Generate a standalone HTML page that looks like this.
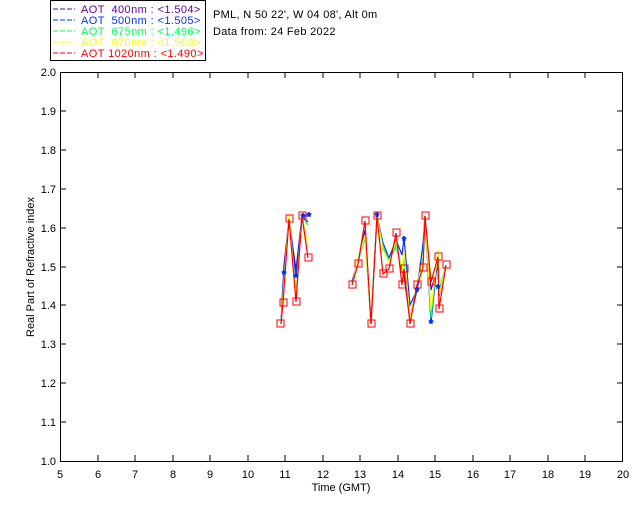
<!DOCTYPE html>
<html><head><style>
body{margin:0;background:#fff;width:640px;height:512px;overflow:hidden}
svg{display:block}
text{font-family:"Liberation Sans",sans-serif;font-size:11px}
</style></head><body>
<svg width="640" height="512" viewBox="0 0 640 512">
<rect x="50.5" y="0.5" width="155" height="60" fill="#fff" stroke="#000"/>
<g font-size="10.5" letter-spacing="0.4">
<line x1="53" y1="9" x2="75" y2="9" stroke="#6000a0" stroke-dasharray="5,2"/><text x="81" y="13" fill="#6000a0" xml:space="preserve">AOT  400nm : &lt;1.504&gt;</text>
<line x1="53" y1="20" x2="75" y2="20" stroke="#0030ff" stroke-dasharray="5,2"/><text x="81" y="24" fill="#0030ff" xml:space="preserve">AOT  500nm : &lt;1.505&gt;</text>
<line x1="53" y1="31" x2="75" y2="31" stroke="#00ff60" stroke-dasharray="5,2"/><text x="81" y="35" fill="#00ff60" xml:space="preserve">AOT  675nm : &lt;1.496&gt;</text>
<line x1="53" y1="42" x2="75" y2="42" stroke="#ffff00" stroke-dasharray="5,2"/><text x="81" y="46" fill="#ffff00" xml:space="preserve">AOT  870nm : &lt;1.503&gt;</text>
<line x1="53" y1="53" x2="75" y2="53" stroke="#ff0000" stroke-dasharray="5,2"/><text x="81" y="57" fill="#ff0000" xml:space="preserve">AOT 1020nm : &lt;1.490&gt;</text>
</g>
<text x="213" y="18" letter-spacing="0.3">PML, N 50 22', W 04 08', Alt 0m</text>
<text x="213" y="35" letter-spacing="0.3">Data from: 24 Feb 2022</text>
<rect x="60.5" y="72.5" width="562" height="389" fill="none" stroke="#000"/>
<g stroke="#000">
<path d="M98 72v6M135 72v6M173 72v6M210 72v6M248 72v6M285 72v6M323 72v6M360 72v6M398 72v6M435 72v6M473 72v6M510 72v6M548 72v6M585 72v6"/>
<path d="M98 461v-6M135 461v-6M173 461v-6M210 461v-6M248 461v-6M285 461v-6M323 461v-6M360 461v-6M398 461v-6M435 461v-6M473 461v-6M510 461v-6M548 461v-6M585 461v-6"/>
<path d="M60 111h6M60 150h6M60 189h6M60 228h6M60 267h6M60 305h6M60 344h6M60 383h6M60 422h6"/>
<path d="M623 111h-6M623 150h-6M623 189h-6M623 228h-6M623 267h-6M623 305h-6M623 344h-6M623 383h-6M623 422h-6"/>
</g>
<g font-size="10" text-anchor="end">
<text x="56" y="76">2.0</text><text x="56" y="115">1.9</text><text x="56" y="154">1.8</text><text x="56" y="193">1.7</text><text x="56" y="232">1.6</text><text x="56" y="271">1.5</text><text x="56" y="309">1.4</text><text x="56" y="348">1.3</text><text x="56" y="387">1.2</text><text x="56" y="426">1.1</text><text x="56" y="465">1.0</text>
</g>
<g font-size="10" text-anchor="middle">
<text x="60" y="478">5</text><text x="98" y="478">6</text><text x="135" y="478">7</text><text x="173" y="478">8</text><text x="210" y="478">9</text><text x="248" y="478">10</text><text x="285" y="478">11</text><text x="323" y="478">12</text><text x="360" y="478">13</text><text x="398" y="478">14</text><text x="435" y="478">15</text><text x="473" y="478">16</text><text x="510" y="478">17</text><text x="548" y="478">18</text><text x="585" y="478">19</text><text x="623" y="478">20</text>
<text x="341" y="491">Time (GMT)</text>
<text transform="translate(34,267) rotate(-90)">Real Part of Refractive index</text>
</g>
<g fill="none" stroke-width="1.2">
<polyline stroke="#6000a0" points="281,322 284,265 289,219 296,270 302,216 308,222"/>
<polyline stroke="#0030ff" points="281,324 284,274 289,218 296,277 302,216 308,216"/>
<polyline stroke="#00ff60" points="281,324 284,282 289,218 296,293 302,216 308,225"/>
<polyline stroke="#ffff00" points="281,324 284,282 289,214 296,297 302,216 308,245"/>
<polyline stroke="#ff0000" points="281,324 283,303 289,219 296,302 302,216 308,258"/>
<polyline stroke="#6000a0" points="352,282 358,262 365,230 371,324 377,216 383,248 389,258 396,244 402,270 404,276 410,320 417,290 423,260 425,216 431,290 438,266 439,296 446,265"/>
<polyline stroke="#0030ff" points="352,281 358,262 365,234 371,324 377,216 383,243 389,258 396,240 402,255 404,238 410,305 417,290 423,244 425,216 431,323 438,255 439,292 446,265"/>
<polyline stroke="#00ff60" points="352,283 358,262 365,238 371,324 377,216 383,247 389,260 396,247 402,268 404,260 410,318 417,285 423,258 425,216 431,318 438,250 439,290 446,265"/>
<polyline stroke="#ffff00" points="352,286 358,259 365,235 371,324 377,216 383,250 389,262 396,242 402,272 404,250 410,320 417,285 423,262 425,216 431,310 438,250 439,295 446,265"/>
<polyline stroke="#ff0000" points="352,285 358,264 365,221 371,324 377,216 383,274 389,269 396,233 402,285 404,269 410,324 417,285 423,268 425,216 431,282 438,257 439,309 446,265"/>
</g>
<g fill="none" stroke="#ff0000">
<rect x="277" y="320" width="7" height="7"/><rect x="280" y="299" width="7" height="7"/><rect x="286" y="215" width="7" height="7"/><rect x="293" y="298" width="7" height="7"/><rect x="299" y="212" width="7" height="7"/><rect x="305" y="254" width="7" height="7"/>
<rect x="349" y="281" width="7" height="7"/><rect x="355" y="260" width="7" height="7"/><rect x="362" y="217" width="7" height="7"/><rect x="368" y="320" width="7" height="7"/><rect x="374" y="212" width="7" height="7"/><rect x="380" y="270" width="7" height="7"/><rect x="386" y="265" width="7" height="7"/><rect x="393" y="229" width="7" height="7"/><rect x="399" y="281" width="7" height="7"/><rect x="401" y="265" width="7" height="7"/><rect x="407" y="320" width="7" height="7"/><rect x="414" y="281" width="7" height="7"/><rect x="420" y="264" width="7" height="7"/><rect x="422" y="212" width="7" height="7"/><rect x="428" y="278" width="7" height="7"/><rect x="435" y="253" width="7" height="7"/><rect x="436" y="305" width="7" height="7"/><rect x="443" y="261" width="7" height="7"/>
</g>
<g stroke="#0030ff" font-size="11" fill="#0030ff" text-anchor="middle">
<text x="284" y="278">*</text><text x="296" y="281">*</text><text x="303" y="221">*</text><text x="309" y="220">*</text><text x="377" y="220">*</text><text x="404" y="244">*</text><text x="431" y="327">*</text><text x="417" y="295">*</text><text x="438" y="292">*</text>
</g>
</svg>
</body></html>
